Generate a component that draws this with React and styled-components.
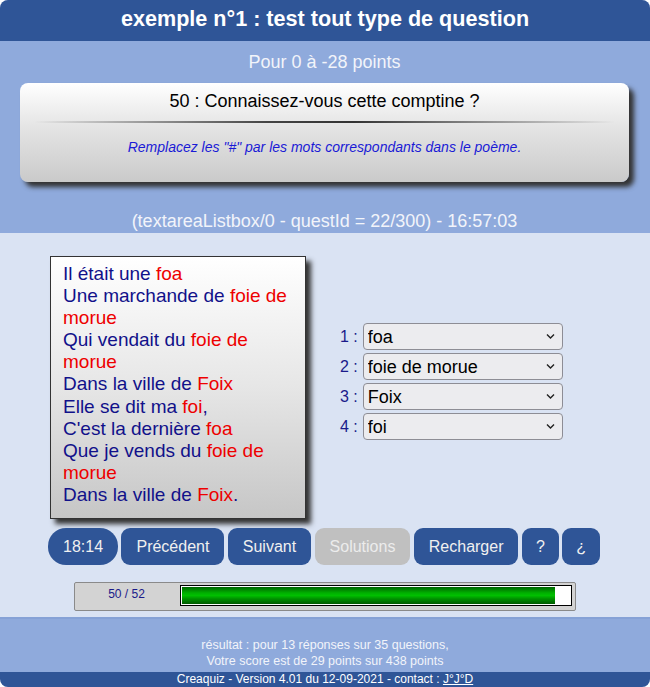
import React from "react";
import styled, { createGlobalStyle } from "styled-components";

const Global = createGlobalStyle`
  html, body { margin: 0; padding: 0; background: #ffffff; }
  body { font-family: "Liberation Sans", Arial, sans-serif; }
  * { box-sizing: border-box; }
`;

const Page = styled.div`
  width: 650px;
  height: 687px;
  border-radius: 8px;
  overflow: hidden;
  display: flex;
  flex-direction: column;
  background: #dae3f3;
`;

const Header = styled.h1`
  margin: 0;
  height: 41px;
  line-height: 38px;
  background: #2f5597;
  color: #ffffff;
  font-size: 21.6px;
  font-weight: bold;
  text-align: center;
`;

const TopBand = styled.section`
  background: #8faadc;
  padding: 11px 21px 1px 20px;
  display: flex;
  flex-direction: column;
  align-items: stretch;
`;

const BandText = styled.div`
  color: #f2f4fa;
  font-size: 18px;
  line-height: 21px;
  text-align: center;
  margin-top: ${(p) => p.$mt || 0}px;
`;

const Card = styled.div`
  margin-top: 10px;
  height: 99px;
  border-radius: 8px;
  background: linear-gradient(to bottom, #ffffff 0%, #e4e4e4 45%, #cacaca 100%);
  box-shadow: 5px 5px 5px #333333;
  padding-top: 8px;
  display: flex;
  flex-direction: column;
  align-items: center;
`;

const CardTitle = styled.div`
  font-size: 18px;
  line-height: 21px;
  color: #000000;
`;

const Rule = styled.div`
  align-self: stretch;
  margin: 9px 14px 0 14px;
  height: 2px;
  background: linear-gradient(to right, rgba(60,60,60,0) 0%, #444 40%, #333 55%, rgba(60,60,60,0) 100%);
`;

const Hint = styled.div`
  margin-top: 16px;
  font-size: 14px;
  line-height: 17px;
  font-style: italic;
  color: #1a1ad6;
`;

const Main = styled.main`
  flex: 1;
  padding: 23px 0 6px 0;
  display: flex;
  flex-direction: column;
`;

const QuestionRow = styled.div`
  display: flex;
  align-items: center;
  gap: 34px;
  padding-left: 50px;
`;

const Poem = styled.div`
  width: 256px;
  height: 263px;
  border: 1px solid #333333;
  background: linear-gradient(to bottom, #ffffff 0%, #e6e6e6 50%, #c6c6c6 100%);
  box-shadow: 5px 5px 5px #333333;
  padding: 6px 10px 0 12px;
  font-size: 19px;
  line-height: 22.1px;
  color: #11118a;
`;

const Word = styled.span`
  color: #ee0000;
`;

const SelectList = styled.div`
  display: flex;
  flex-direction: column;
  gap: 3px;
  margin-top: -12px;
`;

const SelectRow = styled.label`
  display: flex;
  align-items: center;
  gap: 5px;
  color: #1a1a8a;
  font-size: 16px;
`;

const SelectWrap = styled.div`
  position: relative;
  width: 200px;
  height: 27px;
`;

const Select = styled.select`
  appearance: none;
  -webkit-appearance: none;
  width: 100%;
  height: 100%;
  border: 1px solid #8d8d95;
  border-radius: 4px;
  background: #ececef;
  color: #000000;
  font-family: "Liberation Sans", Arial, sans-serif;
  font-size: 18px;
  padding: 0 24px 0 4px;
  outline: none;
`;

const Chevron = styled.svg`
  position: absolute;
  right: 8px;
  top: 10px;
  width: 9px;
  height: 7px;
  pointer-events: none;
`;

const Buttons = styled.div`
  margin-top: 9px;
  display: flex;
  justify-content: center;
  gap: 3.4px;
  padding-right: 2px;
`;

const Button = styled.button`
  height: 37px;
  padding: 0 ${(p) => (p.$narrow ? 14 : 15)}px;
  border: none;
  border-radius: ${(p) => (p.$pill ? "18px" : "9px")};
  background: ${(p) => (p.$disabled ? "#c0c0c0" : "#2f5597")};
  color: ${(p) => (p.$disabled ? "#ececec" : "#f0f0f0")};
  font-family: "Liberation Sans", Arial, sans-serif;
  font-size: 16px;
`;

const Progress = styled.div`
  margin: 17px auto 0 auto;
  width: 502px;
  height: 29px;
  border: 1px solid #8a8a8a;
  border-radius: 2px;
  background: #d3d3d3;
  display: flex;
  align-items: flex-start;
  padding: 2px 3px 0 0;
`;

const ProgressLabel = styled.div`
  width: 105px;
  text-align: center;
  font-size: 12px;
  line-height: 18px;
  color: #1a1a8a;
  padding-right: 2px;
`;

const Track = styled.div`
  flex: 1;
  height: 21px;
  border: 1px solid #000000;
  background: #ffffff;
  padding: 1px;
`;

const Fill = styled.div`
  height: 100%;
  background: linear-gradient(to bottom, #006400 0%, #00b000 35%, #00c000 50%, #009000 70%, #005a00 100%);
`;

const FooterBand = styled.section`
  height: 55px;
  background: #8faadc;
  border-top: 2px solid #86a2d6;
  padding-top: 18px;
  text-align: center;
  color: #f2f4fa;
  font-size: 12.5px;
  line-height: 16px;
`;

const BottomBar = styled.footer`
  height: 15px;
  background: #2f5597;
  color: #ffffff;
  text-align: center;
  font-size: 12px;
  line-height: 15px;
`;

const Link = styled.a`
  color: #ffffff;
  text-decoration: underline;
`;

const answers = ["foa", "foie de morue", "Foix", "foi"];

export default function App() {
  return (
    <>
      <Global />
      <Page>
        <Header>exemple n°1 : test tout type de question</Header>
        <TopBand>
          <BandText>Pour 0 à -28 points</BandText>
          <Card>
            <CardTitle>50 : Connaissez-vous cette comptine ?</CardTitle>
            <Rule />
            <Hint>Remplacez les "#" par les mots correspondants dans le poème.</Hint>
          </Card>
          <BandText $mt={29}>(textareaListbox/0 - questId = 22/300) - 16:57:03</BandText>
        </TopBand>
        <Main>
          <QuestionRow>
            <Poem>
              Il était une <Word>foa</Word>
              <br />
              Une marchande de <Word>foie de morue</Word>
              <br />
              Qui vendait du <Word>foie de morue</Word>
              <br />
              Dans la ville de <Word>Foix</Word>
              <br />
              Elle se dit ma <Word>foi</Word>,
              <br />
              C'est la dernière <Word>foa</Word>
              <br />
              Que je vends du <Word>foie de morue</Word>
              <br />
              Dans la ville de <Word>Foix</Word>.
            </Poem>
            <SelectList>
              {answers.map((a, i) => (
                <SelectRow key={i}>
                  {i + 1} :
                  <SelectWrap>
                    <Select defaultValue={a}>
                      <option>{a}</option>
                    </Select>
                    <Chevron viewBox="0 0 9 7">
                      <path d="M1 1.5 L4.5 5 L8 1.5" fill="none" stroke="#222" strokeWidth="1.4" />
                    </Chevron>
                  </SelectWrap>
                </SelectRow>
              ))}
            </SelectList>
          </QuestionRow>
          <Buttons>
            <Button $pill>18:14</Button>
            <Button>Précédent</Button>
            <Button>Suivant</Button>
            <Button $disabled>Solutions</Button>
            <Button>Recharger</Button>
            <Button $narrow>?</Button>
            <Button $narrow>¿</Button>
          </Buttons>
          <Progress>
            <ProgressLabel>50 / 52</ProgressLabel>
            <Track>
              <Fill style={{ width: `${(50 / 52) * 100}%` }} />
            </Track>
          </Progress>
        </Main>
        <FooterBand>
          résultat : pour 13 réponses sur 35 questions,
          <br />
          Votre score est de 29 points sur 438 points
        </FooterBand>
        <BottomBar>
          Creaquiz - Version 4.01 du 12-09-2021 - contact : <Link href="#">J°J°D</Link>
        </BottomBar>
      </Page>
    </>
  );
}
